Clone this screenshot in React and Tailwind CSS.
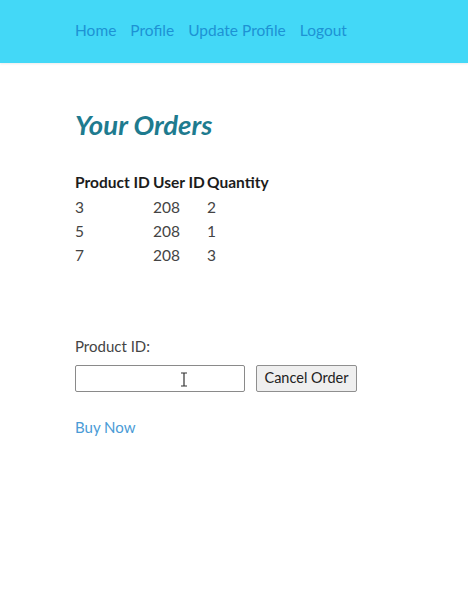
export default function App() {
  const rows = [
    ["3", "208", "2"],
    ["5", "208", "1"],
    ["7", "208", "3"],
  ];
  return (
    <div className="min-h-[604px] bg-white" style={{ fontFamily: "Lato, 'Noto Sans', sans-serif" }}>
      <nav className="h-[63px] bg-[#43d8f7] flex items-center gap-[14px] pl-[75px] pb-[1px] shadow-[0_1px_2px_rgba(0,0,0,0.08)]">
        {["Home", "Profile", "Update Profile", "Logout"].map((t) => (
          <a key={t} className="text-[15.5px] text-[#1d92d4]">{t}</a>
        ))}
      </nav>
      <div className="pl-[75px] pt-[45px]">
        <h1 className="text-[27.5px] font-bold italic text-[#1e7b8f] leading-[34px]">Your Orders</h1>
        <table className="mt-[27px] text-[15.5px] text-[#2b2b2b] border-collapse">
          <thead>
            <tr className="font-bold text-[#1c1c1c]">
              <th className="text-left font-bold p-0 w-[78px] h-[27px]">Product ID</th>
              <th className="text-left font-bold p-0 w-[54px]">User ID</th>
              <th className="text-left font-bold p-0">Quantity</th>
            </tr>
          </thead>
          <tbody>
            {rows.map((r, i) => (
              <tr key={i} className="h-[24px] text-[#444]">
                {r.map((c, j) => (
                  <td key={j} className="p-0">{c}</td>
                ))}
              </tr>
            ))}
          </tbody>
        </table>
        <div className="mt-[67px] text-[15px] text-[#444]">Product ID:</div>
        <div className="mt-[7px] flex items-center gap-[11px]">
          <div className="relative">
            <input className="w-[170px] h-[27px] border border-[#8a8a8a] rounded-[2px] bg-white outline-none" />
            <svg className="absolute left-[105px] top-[7px]" width="8" height="15" viewBox="0 0 8 15">
              <path d="M1 1h6M4 1v13M1 14h6" stroke="#333" strokeWidth="1.2" fill="none" />
            </svg>
          </div>
          <button className="h-[27px] px-[7px] w-[101px] border border-[#8f8f8f] rounded-[2px] bg-[#efefef] text-[14.5px] text-[#222]">Cancel Order</button>
        </div>
        <a className="block mt-[24px] text-[15px] text-[#4a9bd6]">Buy Now</a>
      </div>
    </div>
  );
}
